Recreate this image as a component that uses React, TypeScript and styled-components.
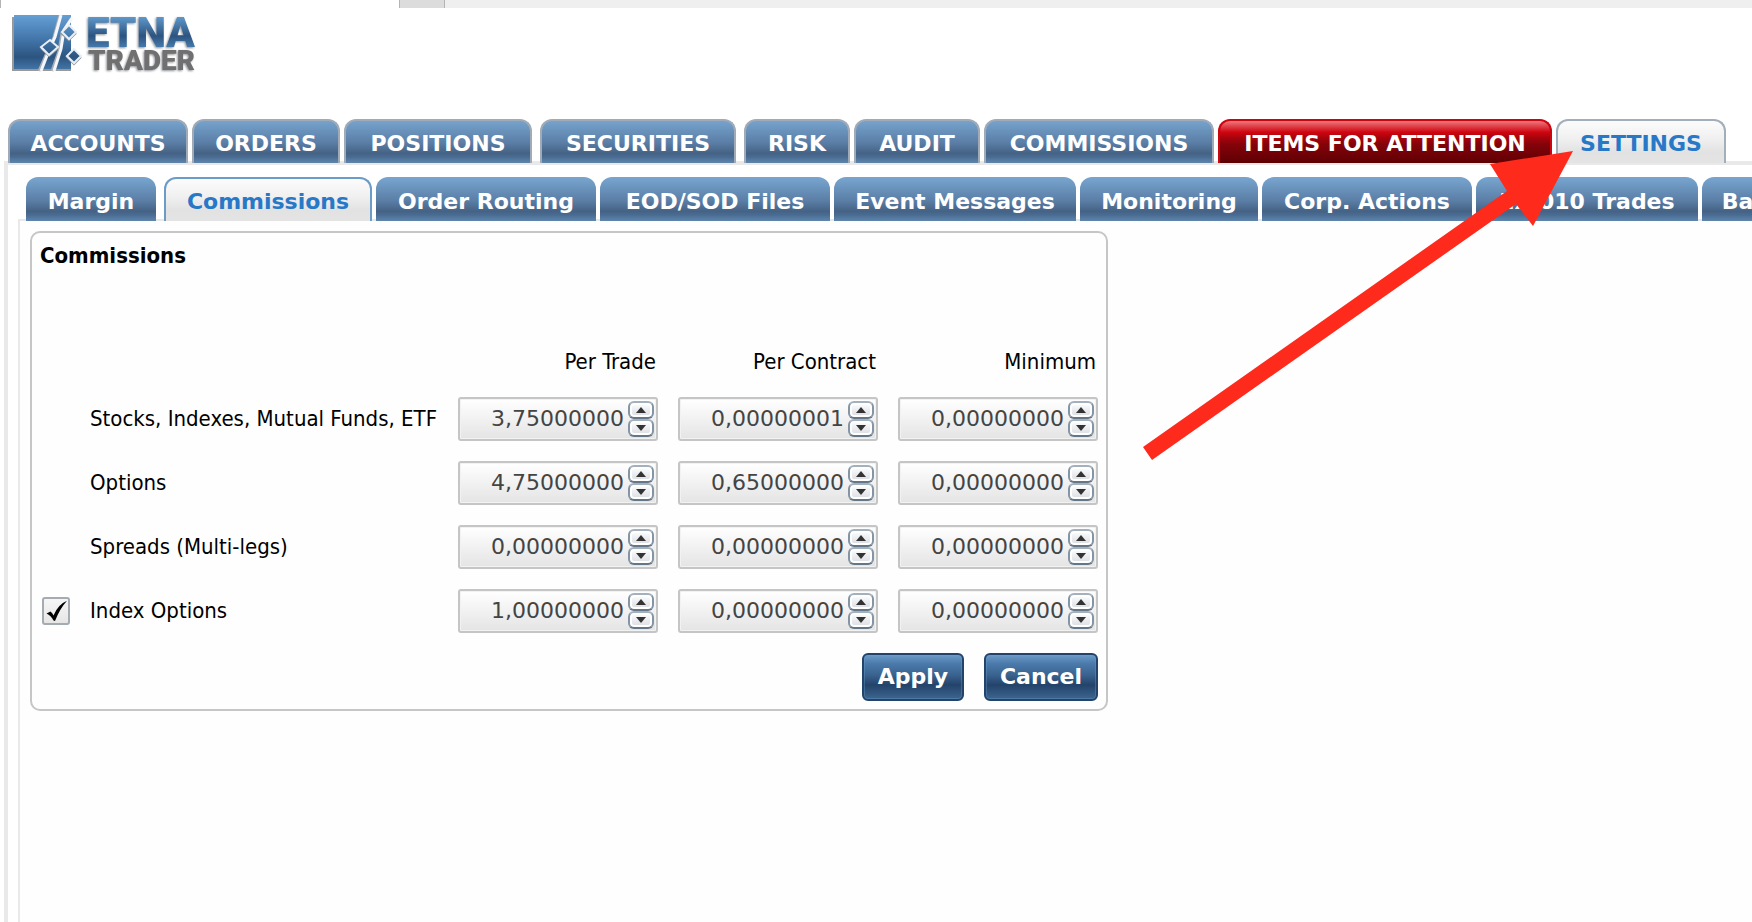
import React, { useState } from "react";
import styled, { createGlobalStyle } from "styled-components";

const GlobalStyle = createGlobalStyle`
  * { box-sizing: border-box; }
  html { background: #fefefe; }
  body {
    margin: 0;
    overflow: hidden;
    color: #000;
    font: 22px/26px "DejaVu Sans", Verdana, sans-serif;
  }
  button, input { font: inherit; }
`;

const Page = styled.div`
  position: relative;
  min-height: 100vh;
  display: flex;
  flex-direction: column;
  background: #fff;
`;

const BrowserStrip = styled.div`
  display: flex;
  height: 8px;
  background: #efefef;
`;

const StripTab = styled.div<{ $width: number; $color: string }>`
  width: ${(p) => p.$width}px;
  background: ${(p) => p.$color};
  border-left: 1px solid #b4b4b4;
`;

const StripRest = styled.div`
  flex: 1;
  border-left: 1px solid #b4b4b4;
`;

const Header = styled.header`
  height: 111px;
  padding: 7px 12px;
`;

const LogoSvg = styled.svg`
  display: block;
`;

const LogoText = styled.text<{ $size: number }>`
  font: 900 ${(p) => p.$size}px Roboto, "Liberation Sans", sans-serif;
  filter: drop-shadow(-1px 1px 1px #8c9096);
`;

const TabRow = styled.div<{ $indent: number }>`
  position: relative;
  z-index: 1;
  display: flex;
  margin-bottom: -2px;
  padding-left: ${(p) => p.$indent}px;
`;

type Tone = "main" | "sub" | "alert" | "mainActive" | "subActive";

const blue =
  "linear-gradient(#78a5ce 0%, #6c96bf 22%, #5a7da5 55%, #456284 78%, #4a6b92 86%, #5f86ae 100%)";
const light = "linear-gradient(#fdfdfd 0%, #f0f0f0 45%, #e2e2e2 75%, #e4e4e4 100%)";

const tones: Record<Tone, { bg: string; border: string; text: string }> = {
  main: { bg: blue, border: "#a0abb7", text: "#fff" },
  sub: { bg: blue, border: "transparent", text: "#fff" },
  alert: {
    bg: "linear-gradient(#f88a90 0%, #e0444c 16%, #cf0510 30%, #a8040c 42%, #84030a 58%, #5e0003 100%)",
    border: "#cc0510",
    text: "#fff",
  },
  mainActive: { bg: light, border: "#a2afbb", text: "#2878c8" },
  subActive: { bg: light, border: "#6b9cc8", text: "#2878c8" },
};

const Tab = styled.button<{ $tone: Tone; $width: number; $gap: number }>`
  flex: none;
  width: ${(p) => p.$width}px;
  height: 44px;
  margin: 0 ${(p) => p.$gap}px 0 0;
  padding: 4px 0 0;
  border: 2px solid ${(p) => tones[p.$tone].border};
  border-bottom: 0;
  border-radius: 12px 12px 0 0;
  background: ${(p) => tones[p.$tone].bg} border-box;
  color: ${(p) => tones[p.$tone].text};
  font-weight: bold;
  white-space: nowrap;
`;

const MainPanel = styled.div`
  flex: 1;
  display: flex;
  flex-direction: column;
  margin-left: 4px;
  padding-top: 12px;
  border: 4px solid #e9e9e9;
  border-width: 4px 0 0 4px;
  overflow: hidden;
`;

const SubPanel = styled.div`
  flex: 1;
  margin-left: 10px;
  padding: 10px;
  border: 2px solid #e9e9e9;
  border-width: 2px 0 0 2px;
  background: #fefefe;
`;

const Card = styled.form`
  width: 1078px;
  padding: 8px;
  border: 2px solid #c6c6c6;
  border-radius: 10px;
`;

const Title = styled.h1`
  margin: 0 0 74px;
  font: bold 22px/30px "DejaVu Sans Condensed", Tahoma, sans-serif;
`;

const Grid = styled.table`
  width: 100%;
  border-collapse: collapse;
  table-layout: fixed;
  font-family: "DejaVu Sans Condensed", Tahoma, sans-serif;
`;

const Col = styled.col<{ $width?: number }>`
  width: ${(p) => (p.$width ? `${p.$width}px` : "auto")};
`;

const Head = styled.th`
  height: 42px;
  padding: 0 2px 8px 0;
  font-weight: normal;
  text-align: right;
`;

const TickCell = styled.td`
  padding: 0 0 0 2px;
`;

const NameCell = styled.td`
  height: 64px;
  padding: 0;
  white-space: nowrap;
`;

const Cell = styled.td`
  padding: 0 0 0 20px;
`;

const Tick = styled.input`
  appearance: none;
  display: block;
  width: 28px;
  height: 28px;
  margin: 0;
  border: 2px solid #a5abb2;
  border-radius: 3px;
  background: linear-gradient(#f6f6f6, #e6e6e6);
  &:checked {
    background:
      url("data:image/svg+xml,%3Csvg xmlns='http://www.w3.org/2000/svg' viewBox='0 0 24 24'%3E%3Cpath d='M2.500 14.500L6.500 12.500Q8.500 14 9.500 16.500Q14 5.500 23 1.800Q16 9.500 11 22L9.500 21.500Q7 16.500 2.500 14.500Z'/%3E%3C/svg%3E"),
      linear-gradient(#f6f6f6, #e6e6e6);
  }
`;

const Field = styled.div`
  display: flex;
  align-items: center;
  height: 44px;
  padding-right: 2px;
  border: 2px solid #c5c5c5;
  border-radius: 3px;
  background: linear-gradient(#fff, #e4e4e4);
  box-shadow: inset 0 0 0 1px #f2f2f2;
`;

const NumberInput = styled.input`
  flex: 1;
  min-width: 0;
  margin: 0;
  padding: 0 4px 0 0;
  border: 0;
  background: none;
  color: #444;
  font-family: "DejaVu Sans", Verdana, sans-serif;
  text-align: right;
`;

const Spinner = styled.div`
  display: flex;
  flex-direction: column;
`;

const Step = styled.button`
  display: flex;
  align-items: center;
  justify-content: center;
  width: 26px;
  height: 18px;
  padding: 0;
  border: 2px solid #8495a5;
  border-color: #a3b1be #8495a5 #657686;
  border-radius: 6px;
  background: linear-gradient(#fff, #d8dce2);
  box-shadow: inset 0 0 0 2px #fff;
`;

const Actions = styled.div`
  display: flex;
  justify-content: flex-end;
  gap: 20px;
  padding-top: 10px;
`;

const Action = styled.button<{ $width: number }>`
  width: ${(p) => p.$width}px;
  height: 48px;
  padding: 0;
  border: 2px solid #24436a;
  border-radius: 6px;
  background: linear-gradient(#6c9ac8 0%, #4a7aab 20%, #3a638f 45%, #24436a 68%, #3c668f 100%);
  box-shadow: inset 0 0 0 1px rgba(110, 160, 205, 0.35);
  color: #fff;
  font-weight: bold;
`;

const Arrow = styled.svg`
  position: absolute;
  z-index: 2;
  left: 1143px;
  top: 151px;
  pointer-events: none;
`;

function Logo() {
  return (
    <LogoSvg width="188" height="60" viewBox="0 0 188 60" role="img" aria-label="ETNA Trader">
      <defs>
        <linearGradient id="mark" x1="0" y1="0" x2="0" y2="56" gradientUnits="userSpaceOnUse">
          <stop offset="0" stopColor="#659fd3" />
          <stop offset="0.4" stopColor="#4579ae" />
          <stop offset="0.75" stopColor="#2c5480" />
          <stop offset="1" stopColor="#4579ac" />
        </linearGradient>
        <linearGradient id="word" x1="0" y1="0" x2="0" y2="32" gradientUnits="userSpaceOnUse">
          <stop offset="0" stopColor="#659fd3" />
          <stop offset="0.65" stopColor="#2c5480" />
          <stop offset="1" stopColor="#4579ac" />
        </linearGradient>
      </defs>
      <path d="M0 2H2V54H59V56H0Z" fill="#999" />
      <path d="M2 0H59V54H2Z" fill="url(#mark)" />
      <path d="M48 0L42 22L37 33L27 56M59 4L50 18L47 36L40 56" fill="none" stroke="#a8adb3" strokeWidth="3" />
      <path d="M49 0L43 22L38 33L29 56M60 3L52 15L49 34L42 56" fill="none" stroke="#f4f8fc" strokeWidth="3" />
      <path d="M29 33L37 41L45 34M49 18L57 25L64 18M54 41L62 49L69 42" fill="none" stroke="#8c949c" strokeWidth="2" />
      <g fill="url(#mark)" stroke="#e9eff5" strokeWidth="2">
        <path d="M57 10L64 17L57 24L50 17Z" />
        <path d="M38 25L46 32L37 40L29 32Z" />
        <path d="M62 34L69 41L62 48L55 41Z" />
      </g>
      <LogoText x="74" y="32" $size={42} fill="url(#word)">ETNA</LogoText>
      <LogoText x="76" y="55" $size={28} fill="#707070">TRADER</LogoText>
    </LogoSvg>
  );
}

type TabItem = { label: string; width: number; gap?: number; tone?: Tone };

const mainTabs: TabItem[] = [
  { label: "ACCOUNTS", width: 180 },
  { label: "ORDERS", width: 148 },
  { label: "POSITIONS", width: 188, gap: 8 },
  { label: "SECURITIES", width: 196, gap: 8 },
  { label: "RISK", width: 106 },
  { label: "AUDIT", width: 126 },
  { label: "COMMISSIONS", width: 230 },
  { label: "ITEMS FOR ATTENTION", width: 334, tone: "alert" },
  { label: "SETTINGS", width: 170, tone: "mainActive" },
];

const subTabs: TabItem[] = [
  { label: "Margin", width: 130, gap: 8 },
  { label: "Commissions", width: 208, tone: "subActive" },
  { label: "Order Routing", width: 220 },
  { label: "EOD/SOD Files", width: 230 },
  { label: "Event Messages", width: 242 },
  { label: "Monitoring", width: 178 },
  { label: "Corp. Actions", width: 210 },
  { label: "EX 010 Trades", width: 222 },
  { label: "Balances", width: 150 },
];

const columns = ["Per Trade", "Per Contract", "Minimum"];

const rows = [
  { name: "Stocks, Indexes, Mutual Funds, ETF", values: ["3,75000000", "0,00000001", "0,00000000"] },
  { name: "Options", values: ["4,75000000", "0,65000000", "0,00000000"] },
  { name: "Spreads (Multi-legs)", values: ["0,00000000", "0,00000000", "0,00000000"] },
  { name: "Index Options", values: ["1,00000000", "0,00000000", "0,00000000"], tick: true },
];

function Tabs({ items, base, indent }: { items: TabItem[]; base: Tone; indent: number }) {
  return (
    <TabRow $indent={indent} role="tablist">
      {items.map((t) => (
        <Tab
          key={t.label}
          role="tab"
          aria-selected={t.tone === "mainActive" || t.tone === "subActive"}
          $tone={t.tone ?? base}
          $width={t.width}
          $gap={t.gap ?? 4}
        >
          {t.label}
        </Tab>
      ))}
    </TabRow>
  );
}

const STEP = 0.00000001;

function NumberField({ label, initial }: { label: string; initial: string }) {
  const [value, setValue] = useState(initial);
  const shift = (by: number) =>
    setValue((v) => Math.max(0, Number(v.replace(",", ".")) + by).toFixed(8).replace(".", ","));
  return (
    <Field>
      <NumberInput aria-label={label} value={value} onChange={(e) => setValue(e.target.value)} />
      <Spinner>
        <Step type="button" aria-label={`Increase ${label}`} onClick={() => shift(STEP)}>
          <svg width="10" height="6" viewBox="0 0 10 6"><path d="M5 0L10 6H0Z" fill="#333" /></svg>
        </Step>
        <Step type="button" aria-label={`Decrease ${label}`} onClick={() => shift(-STEP)}>
          <svg width="10" height="6" viewBox="0 0 10 6"><path d="M0 0H10L5 6Z" fill="#333" /></svg>
        </Step>
      </Spinner>
    </Field>
  );
}

export default function App() {
  const [indexOptions, setIndexOptions] = useState(true);
  return (
    <Page>
      <GlobalStyle />
      <BrowserStrip>
        <StripTab $width={399} $color="#fff" />
        <StripTab $width={45} $color="#dcdcdc" />
        <StripRest />
      </BrowserStrip>
      <Header>
        <Logo />
      </Header>
      <Tabs items={mainTabs} base="main" indent={8} />
      <MainPanel>
        <Tabs items={subTabs} base="sub" indent={18} />
        <SubPanel>
          <Card onSubmit={(e) => e.preventDefault()}>
            <Title>Commissions</Title>
            <Grid>
              <colgroup>
                <Col $width={50} />
                <Col />
                <Col $width={220} />
                <Col $width={220} />
                <Col $width={220} />
              </colgroup>
              <thead>
                <tr>
                  <TickCell />
                  <td />
                  {columns.map((c) => (
                    <Head key={c} scope="col">{c}</Head>
                  ))}
                </tr>
              </thead>
              <tbody>
                {rows.map((r) => (
                  <tr key={r.name}>
                    <TickCell>
                      {r.tick && (
                        <Tick
                          id="index-options"
                          type="checkbox"
                          checked={indexOptions}
                          onChange={(e) => setIndexOptions(e.target.checked)}
                        />
                      )}
                    </TickCell>
                    <NameCell>
                      {r.tick ? <label htmlFor="index-options">{r.name}</label> : r.name}
                    </NameCell>
                    {r.values.map((v, i) => (
                      <Cell key={columns[i]}>
                        <NumberField label={`${r.name}, ${columns[i]}`} initial={v} />
                      </Cell>
                    ))}
                  </tr>
                ))}
              </tbody>
            </Grid>
            <Actions>
              <Action type="submit" $width={102}>Apply</Action>
              <Action type="button" $width={114}>Cancel</Action>
            </Actions>
          </Card>
        </SubPanel>
      </MainPanel>
      <Arrow width="430" height="310" viewBox="0 0 430 310" aria-hidden="true">
        <path d="M430 0L390 75L373 53L9 309L0 296L364 40L347 13Z" fill="#fe2a1c" />
      </Arrow>
    </Page>
  );
}
